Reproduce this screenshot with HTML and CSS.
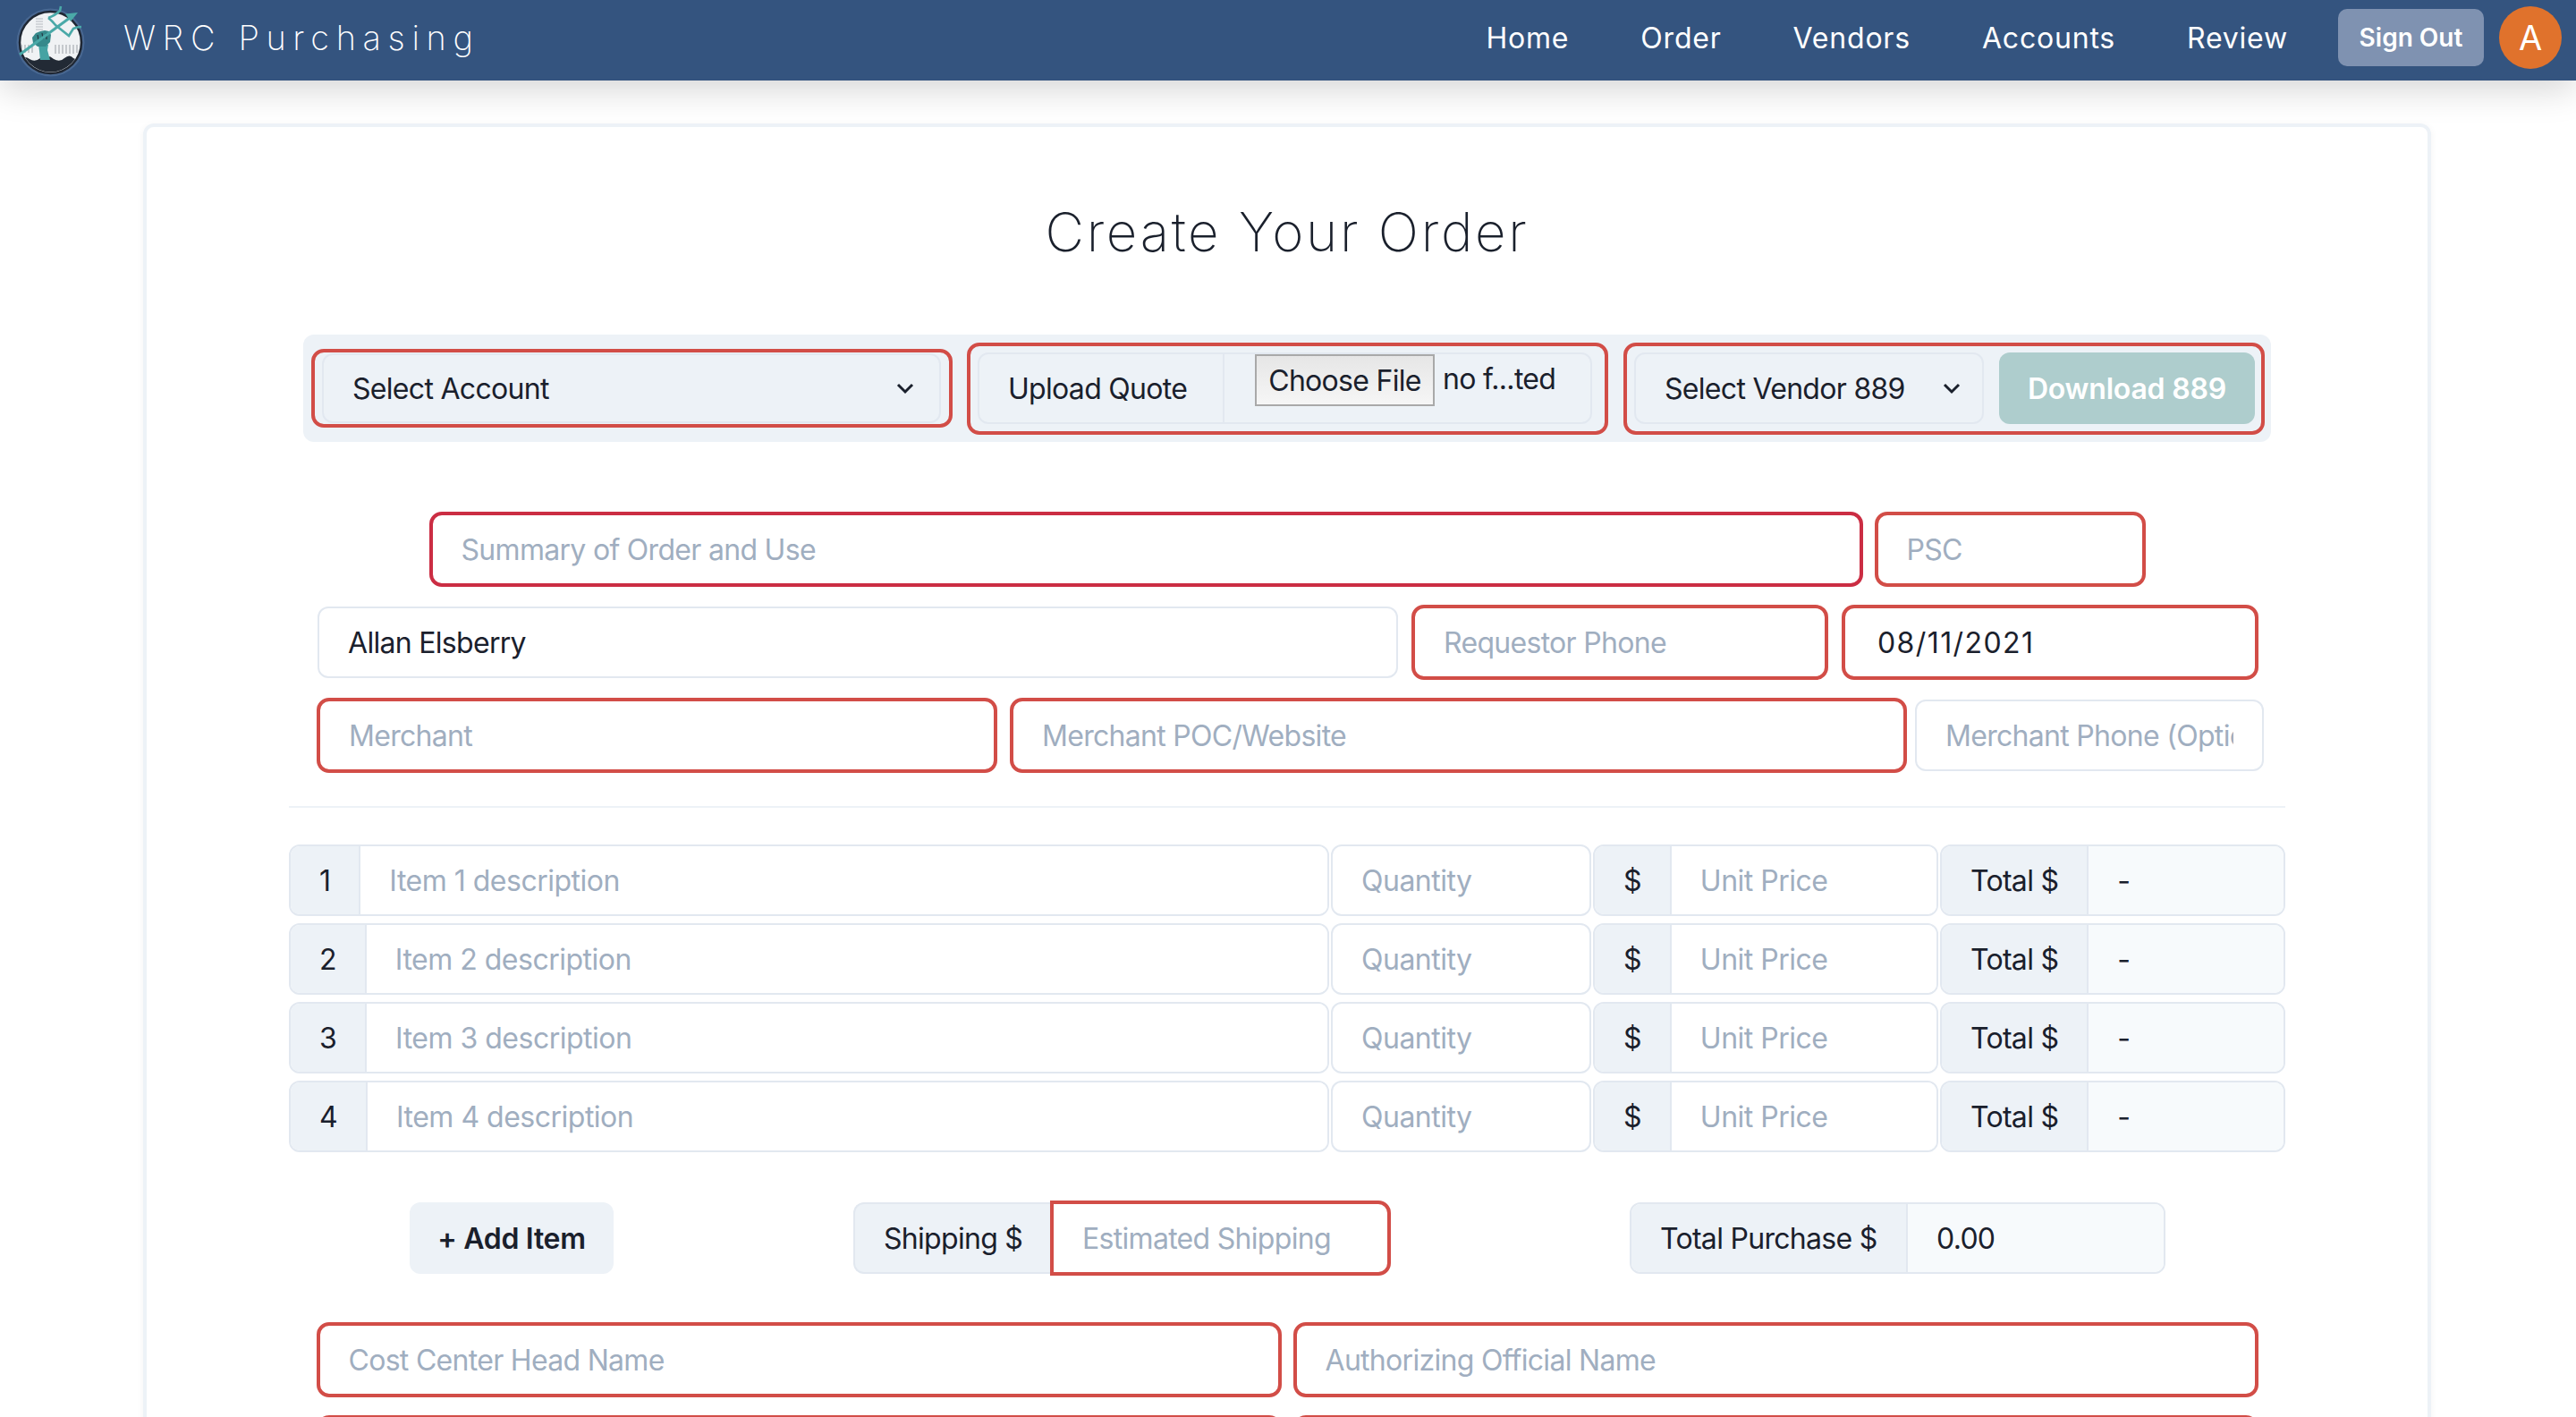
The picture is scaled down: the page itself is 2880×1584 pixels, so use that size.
FILE: index.html
```html
<!DOCTYPE html>
<html lang="en">
<head>
    <meta charset="UTF-8">
    <title>WRC Purchasing</title>
    <link rel="stylesheet" href="styles.css">
</head>
<body>
    <nav class="navbar">
        <svg class="logo" viewBox="0 0 100 90" width="100" height="90">
            <defs>
                <clipPath id="logo-disc"><circle cx="56.5" cy="47.5" r="33"/></clipPath>
            </defs>
            <circle cx="56.5" cy="47.5" r="38" fill="#6f8db5" opacity="0.35"/>
            <circle cx="56.5" cy="47.5" r="34.5" fill="#f0f2f4" stroke="#1f2733" stroke-width="2.5"/>
            <g clip-path="url(#logo-disc)">
                <path d="M24 50v9M28 50v9M32 50v9M36 50v9M62 50v10M66 50v10M70 50v10M74 50v10M78 50v10M82 50v10M86 50v9" stroke="#a9adb3" stroke-width="1.2"/>
                <path d="M40 21h8M40 24h8M40 27h8M40 30h8M40 33h8" stroke="#b6babf" stroke-width="1.2"/>
                <path d="M20 68q7-7 13-2q6 4 12-1q9-5 15 1q7 4 12-1q6-5 10 0q4 3 9-2v22H20z" fill="#222a35"/>
            </g>
            <path d="M43 50h11l-1 6 3 11h-11l-1-10z" fill="#45a3a3"/>
            <path d="M36 42l4-5 5-2 5-1 5 1 2 4-1 8-5 5h-9l-5-4z" fill="#36898b"/>
            <path d="M42 39l1 6M47 37l1 7M52 37l0 7" stroke="#1f2733" stroke-width="1"/>
            <path d="M22 61L82 17" stroke="#4aa9a8" stroke-width="3"/>
            <path d="M87 14L73 15.500L79 24z" fill="#4aa9a8"/>
            <path d="M54 20q4 3 8 8l15 12q3-5 5-8q4-2 9-2" fill="none" stroke="#4aa9a8" stroke-width="2.600"/>
            <path d="M54 20q8-3 13-8l1-5" fill="none" stroke="#4aa9a8" stroke-width="2.600"/>
        </svg>
        <span class="brand">WRC Purchasing</span>
        <div class="nav-links">
            <a class="nav-link">Home</a>
            <a class="nav-link">Order</a>
            <a class="nav-link">Vendors</a>
            <a class="nav-link">Accounts</a>
            <a class="nav-link">Review</a>
        </div>
        <button class="sign-out">Sign Out</button>
        <div class="avatar">A</div>
    </nav>

    <main class="card">
        <h1 class="page-title">Create Your Order</h1>

        <div class="toolbar">
            <div class="req-box account-box">
                <div class="fake-select account-select">
                    <span>Select Account</span>
                    <svg class="chevron" viewBox="0 0 20 20" width="20" height="20"><path d="M2 6l8 8 8-8" fill="none" stroke="#1a202c" stroke-width="3"/></svg>
                </div>
            </div>
            <div class="req-box quote-box">
                <div class="upload-group">
                    <span class="upload-label">Upload Quote</span>
                    <div class="upload-input">
                        <button class="file-btn">Choose File</button>
                        <span class="file-name">no f...ted</span>
                    </div>
                </div>
            </div>
            <div class="req-box vendor-box">
                <div class="fake-select vendor-select">
                    <span>Select Vendor 889</span>
                    <svg class="chevron" viewBox="0 0 20 20" width="20" height="20"><path d="M2 6l8 8 8-8" fill="none" stroke="#1a202c" stroke-width="3"/></svg>
                </div>
                <button class="download-btn">Download 889</button>
            </div>
        </div>

        <div class="form-row row-summary">
            <input class="field req dark w-summary" placeholder="Summary of Order and Use">
            <input class="field req w-psc" placeholder="PSC">
        </div>
        <div class="form-row row-requestor">
            <input class="field w-name" value="Allan Elsberry">
            <input class="field req w-phone" placeholder="Requestor Phone">
            <input class="field req w-date" value="08/11/2021">
        </div>
        <div class="form-row row-merchant">
            <input class="field req w-merchant" placeholder="Merchant">
            <input class="field req w-poc" placeholder="Merchant POC/Website">
            <input class="field w-mphone" placeholder="Merchant Phone (Optional)">
        </div>

        <hr class="divider">

        <div class="item-row">
            <div class="group"><span class="addon">1</span><input class="group-input" placeholder="Item 1 description"></div>
            <input class="field" placeholder="Quantity">
            <div class="group"><span class="addon">$</span><input class="group-input" placeholder="Unit Price"></div>
            <div class="group"><span class="addon">Total $</span><input class="group-input readonly" value="-"></div>
        </div>
        <div class="item-row">
            <div class="group"><span class="addon">2</span><input class="group-input" placeholder="Item 2 description"></div>
            <input class="field" placeholder="Quantity">
            <div class="group"><span class="addon">$</span><input class="group-input" placeholder="Unit Price"></div>
            <div class="group"><span class="addon">Total $</span><input class="group-input readonly" value="-"></div>
        </div>
        <div class="item-row">
            <div class="group"><span class="addon">3</span><input class="group-input" placeholder="Item 3 description"></div>
            <input class="field" placeholder="Quantity">
            <div class="group"><span class="addon">$</span><input class="group-input" placeholder="Unit Price"></div>
            <div class="group"><span class="addon">Total $</span><input class="group-input readonly" value="-"></div>
        </div>
        <div class="item-row">
            <div class="group"><span class="addon">4</span><input class="group-input" placeholder="Item 4 description"></div>
            <input class="field" placeholder="Quantity">
            <div class="group"><span class="addon">$</span><input class="group-input" placeholder="Unit Price"></div>
            <div class="group"><span class="addon">Total $</span><input class="group-input readonly" value="-"></div>
        </div>

        <div class="totals-row">
            <button class="add-item">+ Add Item</button>
            <div class="group shipping-group">
                <span class="addon">Shipping $</span>
                <input class="shipping-input" placeholder="Estimated Shipping">
            </div>
            <div class="group purchase-group">
                <span class="addon">Total Purchase $</span>
                <input class="group-input readonly" value="0.00">
            </div>
        </div>

        <div class="form-row row-names">
            <input class="field req w-half" placeholder="Cost Center Head Name">
            <input class="field req w-half" placeholder="Authorizing Official Name">
        </div>
        <div class="form-row row-emails">
            <input class="field req w-half">
            <input class="field req w-half">
        </div>
    </main>
</body>
</html>
```

FILE: styles.css
```css
html, body {
    height: 100%;
    overflow: hidden;
}
body {
    margin: 0;
    background: #ffffff;
    color: #1a202c;
    font-family: Inter, "Liberation Sans", sans-serif;
    font-size: 32px;
    letter-spacing: -0.7px;
}
input, button {
    font-family: inherit;
    font-size: 32px;
    letter-spacing: inherit;
    color: #1a202c;
    outline: none;
    box-sizing: border-box;
}
input::placeholder {
    color: #a0aec0;
    opacity: 1;
}

/* top bar */
.navbar {
    display: flex;
    align-items: center;
    height: 90px;
    background: #34547f;
    box-shadow: 0 8px 40px rgba(0, 0, 0, 0.18);
    color: #ffffff;
    position: relative;
}
.logo {
    flex: none;
}
.brand {
    margin: 0 0 6px 38px;
    font-size: 38px;
    font-weight: 200;
    letter-spacing: 0.2em;
    white-space: nowrap;
}
.nav-links {
    display: flex;
    gap: 80px;
    margin: 0 0 6px auto;
}
.nav-link {
    letter-spacing: 0.025em;
}
.sign-out {
    width: 163px;
    height: 64px;
    margin: 0 0 6px 56px;
    border: none;
    border-radius: 10px;
    background: #7f92b1;
    color: #ffffff;
    font-size: 28px;
    font-weight: 600;
    letter-spacing: 0;
}
.avatar {
    display: flex;
    align-items: center;
    justify-content: center;
    width: 70px;
    height: 70px;
    margin: 0 16px 6px 17px;
    border-radius: 50%;
    background: #e0722c;
    font-size: 38px;
    letter-spacing: 0;
}

/* page card */
.card {
    box-sizing: border-box;
    width: 2558px;
    margin: 48px 0 0 160px;
    height: 1600px;
    border: 4px solid #edf2f7;
    border-radius: 12px;
    box-shadow: 0 2px 8px rgba(0, 0, 0, 0.05);
    display: flex;
    flex-direction: column;
    align-items: center;
}
.page-title {
    margin: 81px 0 0;
    height: 151px;
    line-height: 72px;
    font-size: 60px;
    font-weight: 200;
    letter-spacing: 2.7px;
}

/* upload / select strip */
.toolbar {
    display: flex;
    align-items: center;
    box-sizing: border-box;
    width: 2200px;
    height: 120px;
    padding-left: 9px;
    border-radius: 12px;
    background: #edf2f7;
}
.req-box {
    display: flex;
    align-items: center;
    box-sizing: border-box;
    border: 4px solid #d24d47;
    border-radius: 14px;
}
.account-box {
    width: 717px;
    height: 88px;
    padding-left: 8px;
}
.quote-box {
    width: 717px;
    height: 103px;
    margin-left: 16px;
    padding-left: 8px;
}
.vendor-box {
    width: 717px;
    height: 103px;
    margin-left: 17px;
    padding-left: 8px;
}
.fake-select {
    display: flex;
    align-items: center;
    justify-content: space-between;
    box-sizing: border-box;
    height: 80px;
    border: 2px solid #e2e8f0;
    border-radius: 12px;
}
.account-select {
    width: 692px;
    height: 78px;
    padding: 0 28px 0 32px;
}
.vendor-select {
    width: 391px;
    padding: 0 24px 0 32px;
}
.chevron {
    flex: none;
}
.upload-group {
    display: flex;
    box-sizing: border-box;
    width: 687px;
    height: 80px;
    border: 2px solid #e2e8f0;
    border-radius: 12px;
}
.upload-label {
    display: flex;
    align-items: center;
    box-sizing: border-box;
    width: 274px;
    padding-left: 32px;
    border-right: 2px solid #e2e8f0;
}
.upload-input {
    display: flex;
    align-items: flex-start;
    padding-left: 34px;
}
.file-btn {
    width: 201px;
    height: 58px;
    margin-top: 0;
    border: 2px solid #a9a9a9;
    background: linear-gradient(#e6e6e6, #f6f6f6);
    white-space: nowrap;
    padding: 0;
}
.file-name {
    margin-left: 9px;
    line-height: 56px;
    white-space: nowrap;
}
.download-btn {
    width: 286px;
    height: 80px;
    margin-left: 17px;
    border: none;
    border-radius: 12px;
    background: #aecdcd;
    color: #ffffff;
    font-weight: 600;
    letter-spacing: -0.2px;
}

/* plain form rows */
.form-row {
    display: flex;
    align-items: center;
    justify-content: center;
}
.field {
    box-sizing: border-box;
    height: 80px;
    min-width: 0;
    padding: 0 32px;
    border: 2px solid #e2e8f0;
    border-radius: 12px;
    background: #ffffff;
}
.field.req {
    height: 84px;
    padding: 0 32px;
    border: 4px solid #d24d47;
    border-radius: 14px;
}
.field.req.dark {
    border-color: #cb2d43;
}
.row-summary {
    margin-top: 78px;
    gap: 13px;
}
.w-summary { width: 1603px; }
.w-psc { width: 303px; }
.row-requestor {
    margin: 20px 0 0 2px;
    gap: 15px;
}
.w-name { width: 1208px; }
.w-phone { width: 466px; }
.w-date {
    width: 466px;
    letter-spacing: 1.4px;
}
.field.req.w-date {
    padding-left: 36px;
}
.row-merchant {
    margin: 20px 0 0 7px;
}
.w-merchant {
    width: 761px;
    margin-right: 14px;
}
.w-poc {
    width: 1003px;
    margin-right: 9px;
}
.w-mphone { width: 390px; }
.row-names {
    margin-top: 52px;
    gap: 13px;
}
.row-emails {
    margin-top: 20px;
    gap: 13px;
}
.w-half { width: 1079px; }

.divider {
    width: 2232px;
    height: 2px;
    margin: 37px 0 41px;
    border: none;
    background: #edf2f7;
    flex: none;
}

/* line items */
.item-row {
    display: grid;
    grid-template-columns: 1163px 291px 386px 386px;
    gap: 2px;
    width: 2232px;
    margin-bottom: 8px;
}
.item-row input {
    letter-spacing: -0.5px;
}
.group {
    display: flex;
    box-sizing: border-box;
    height: 80px;
    min-width: 0;
    border: 2px solid #e2e8f0;
    border-radius: 12px;
    overflow: hidden;
}
.addon {
    display: flex;
    align-items: center;
    flex: none;
    padding: 0 32px;
    background: #edf2f7;
    border-right: 2px solid #e2e8f0;
    white-space: nowrap;
}
.group-input {
    flex: 1;
    min-width: 0;
    padding: 0 32px;
    border: none;
    background: #ffffff;
}
.group-input.readonly {
    background: #f7fafc;
}

/* add item, shipping, total */
.totals-row {
    display: flex;
    align-items: center;
    align-self: flex-start;
    height: 84px;
    margin: 46px 0 0 294px;
}
.add-item {
    width: 228px;
    height: 80px;
    border: none;
    border-radius: 12px;
    background: #edf2f7;
    font-weight: 600;
    letter-spacing: -0.3px;
}
.shipping-group {
    width: 601px;
    height: 84px;
    margin-left: 268px;
    border: none;
    overflow: visible;
}
.shipping-group .addon {
    width: 220px;
    box-sizing: border-box;
    height: 80px;
    margin-top: 2px;
    border: 2px solid #e2e8f0;
    border-right: none;
    border-radius: 12px 0 0 12px;
}
.shipping-input {
    width: 381px;
    height: 84px;
    padding: 0 32px;
    border: 4px solid #d24d47;
    border-radius: 0 14px 14px 0;
}
.purchase-group {
    width: 599px;
    margin-left: 267px;
}
.purchase-group .addon {
    width: 309px;
    box-sizing: border-box;
}
```
